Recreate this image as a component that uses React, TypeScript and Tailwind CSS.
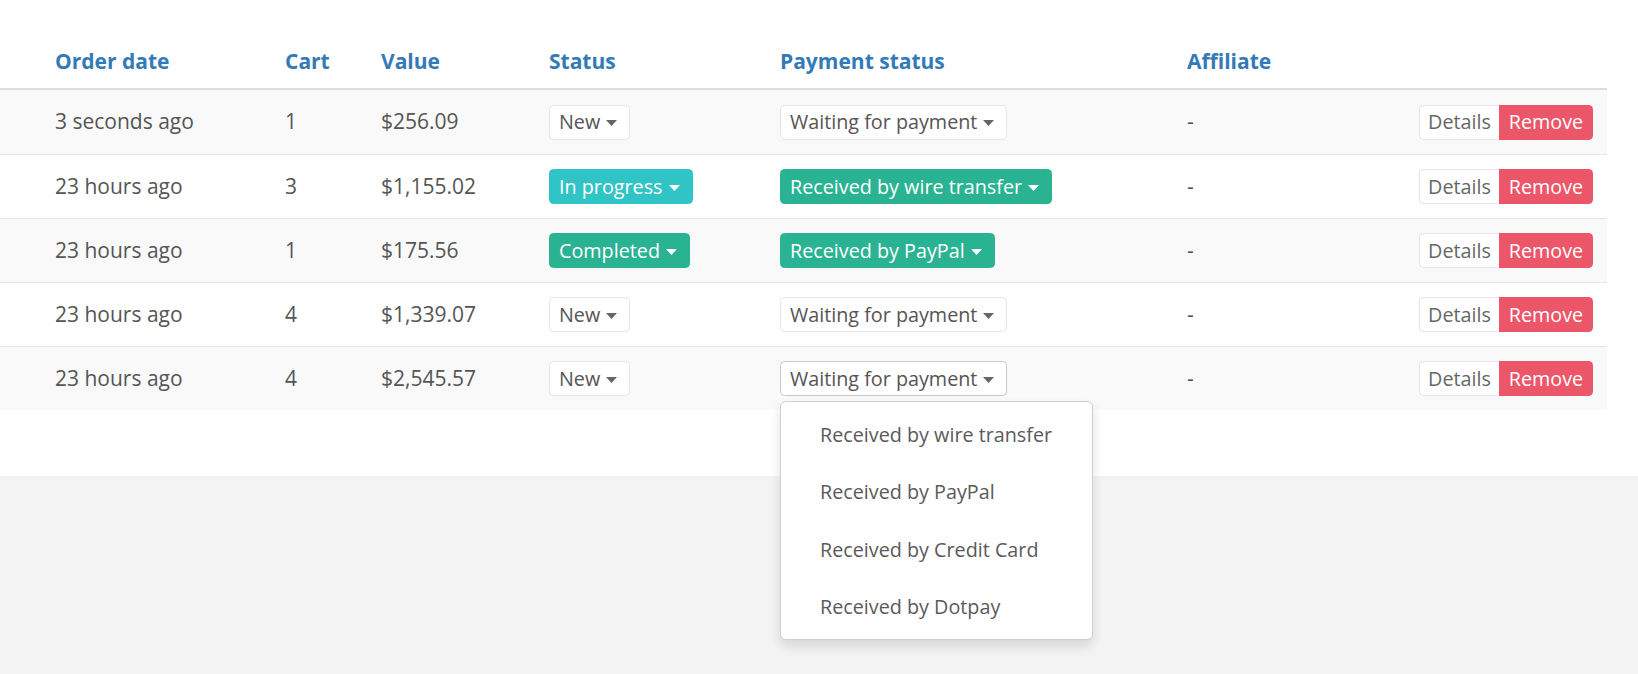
import React from "react";

type Variant = "plain" | "teal" | "green";

const Caret = ({ color }: { color: string }) => (
  <svg width="11" height="6" viewBox="0 0 11 6" className="ml-[6px] mt-[2px]">
    <path d="M0 0 L11 0 L5.5 6 Z" fill={color} />
  </svg>
);

const DropBtn = ({ label, variant, open }: { label: string; variant: Variant; open?: boolean }) => {
  const cls =
    variant === "teal"
      ? "bg-[#31c4c6] border-[#31c4c6] text-white"
      : variant === "green"
      ? "bg-[#2ab392] border-[#2ab392] text-white"
      : open
      ? "bg-white border-[#c9c9c9] text-[#555]"
      : "bg-white border-[#e4e6e8] text-[#555]";
  return (
    <div
      className={`inline-flex items-center h-[35px] pl-[9px] pr-[12px] rounded-[4.5px] border-[1.5px] leading-none text-[19.75px] ${cls}`}
    >
      <span>{label}</span>
      <Caret color={variant === "plain" ? "#666" : "#fff"} />
    </div>
  );
};

const rows = [
  { date: "3 seconds ago", cart: "1", value: "$256.09", status: ["New", "plain"], pay: ["Waiting for payment", "plain"] },
  { date: "23 hours ago", cart: "3", value: "$1,155.02", status: ["In progress", "teal"], pay: ["Received by wire transfer", "green"] },
  { date: "23 hours ago", cart: "1", value: "$175.56", status: ["Completed", "green"], pay: ["Received by PayPal", "green"] },
  { date: "23 hours ago", cart: "4", value: "$1,339.07", status: ["New", "plain"], pay: ["Waiting for payment", "plain"] },
  { date: "23 hours ago", cart: "4", value: "$2,545.57", status: ["New", "plain"], pay: ["Waiting for payment", "plain"] },
];

const grid = "grid grid-cols-[230px_96px_168px_231px_407px_1fr_auto] pl-[55px] pr-[14px]";

export default function App() {
  return (
    <div
      className="w-[1638px] h-[674px] bg-[#f3f3f3] relative overflow-hidden text-[21px] text-[#555]"
      style={{ fontFamily: '"Open Sans", "Noto Sans", sans-serif' }}
    >
      <div className="bg-white h-[476px]">
        <div className="w-[1607px]">
          <div className={`${grid} items-end h-[90px] border-b-2 border-[#dddddd] font-bold text-[#337ab7] pb-[11px]`}>
            <div>Order date</div>
            <div>Cart</div>
            <div>Value</div>
            <div>Status</div>
            <div>Payment status</div>
            <div>Affiliate</div>
            <div />
          </div>
          {rows.map((r, i) => (
            <div
              key={i}
              className={`${grid} items-center h-[64px] ${i > 0 ? "border-t-[1.5px] border-[#e6e6e6]" : ""} ${
                i % 2 === 0 ? "bg-[#f9f9f9]" : "bg-white"
              }`}
            >
              <div>{r.date}</div>
              <div>{r.cart}</div>
              <div>{r.value}</div>
              <div>
                <DropBtn label={r.status[0]} variant={r.status[1] as Variant} />
              </div>
              <div className="relative">
                <DropBtn label={r.pay[0]} variant={r.pay[1] as Variant} open={i === 4} />
                {i === 4 && (
                  <div className="absolute left-0 top-[40px] w-[313px] h-[239px] bg-white border-[1.5px] border-[#d0d0d0] rounded-[6px] shadow-[0_6px_12px_rgba(0,0,0,0.12)] pt-[4px] z-10 text-[19.75px]">
                    {["Received by wire transfer", "Received by PayPal", "Received by Credit Card", "Received by Dotpay"].map(
                      (t) => (
                        <div key={t} className="h-[57.5px] flex items-center pl-[39px] text-[#5a5a5a]">
                          {t}
                        </div>
                      )
                    )}
                  </div>
                )}
              </div>
              <div>-</div>
              <div className="flex h-[35px] leading-none text-[19.75px]">
                <div className="flex items-center bg-white border-[1.5px] border-r-0 border-[#e4e6e8] rounded-l-[4.5px] text-[#666] w-[80px] justify-center">
                  Details
                </div>
                <div className="flex items-center justify-center w-[94px] bg-[#ec5669] text-white rounded-r-[4.5px]">
                  Remove
                </div>
              </div>
            </div>
          ))}
        </div>
      </div>
    </div>
  );
}
